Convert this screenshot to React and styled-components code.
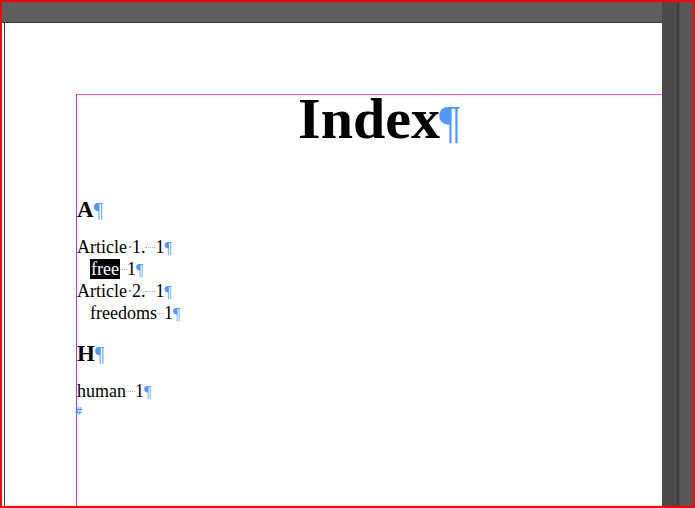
import React from "react";
import styled, { createGlobalStyle } from "styled-components";

const GlobalStyle = createGlobalStyle`
	html, body {
		margin: 0;
		padding: 0;
		background: #ffffff;
		overflow: hidden;
	}
`;

const BLUE = "#5097ff";

const Window = styled.div`
	box-sizing: border-box;
	width: 695px;
	height: 508px;
	border: 2px solid #ff0000;
	display: grid;
	grid-template-columns: 660px 1fr;
	overflow: hidden;
	font-family: "Liberation Serif", "Times New Roman", serif;
`;

const Workspace = styled.div`
	display: grid;
	grid-template-rows: 20px 1px 1fr;
	min-height: 0;
`;

const TopBar = styled.div`
	background: #5e5e5e;
`;

const BarEdge = styled.div`
	background: #3c3c3c;
`;

const Pasteboard = styled.div`
	background: #ffffff;
	padding-left: 2px;
	overflow: hidden;
	min-height: 0;
`;

const Sheet = styled.div`
	height: 100%;
	box-sizing: border-box;
	border-left: 1px solid #3a3a3a;
	padding: 71px 0 0 71px;
	background: #ffffff;
`;

const SidePanel = styled.div`
	display: grid;
	grid-template-columns: 15px 2px 1px 1fr;
`;

const PanelStrip = styled.div`
	background: ${(p) => p.tone};
`;

const TextFrame = styled.div`
	width: 604px;
	height: 420px;
	border-top: 1px solid #ff55ff;
	border-left: 1px solid #a43cf5;
	color: #000000;
`;

const Title = styled.h1`
	margin: 0;
	font-size: 58px;
	line-height: 47px;
	font-weight: bold;
	text-align: center;
`;

const Letter = styled.h2`
	margin: ${(p) => p.gap}px 0 0;
	font-size: 23px;
	line-height: 24px;
	font-weight: bold;
`;

const Entry = styled.div`
	margin: ${(p) => p.gap || 0}px 0 0;
	padding-left: ${(p) => (p.sub ? 13 : 0)}px;
	font-size: 18px;
	line-height: 22px;
	height: 22px;
	white-space: nowrap;
`;

const Pilcrow = styled.span`
	color: ${BLUE};
	font-weight: normal;
	line-height: 0;
	font-size: ${(p) => (p.big ? "0.8em" : "0.9em")};
	margin-left: ${(p) => (p.big ? -1 : 0)}px;
`;

const SpaceDot = styled.span`
	color: ${BLUE};
	letter-spacing: -1px;
`;

const Tab = styled.span`
	display: inline-block;
	width: ${(p) => p.w}px;
	height: 0;
	border-bottom: 1.5px dotted #8fbaff;
	vertical-align: 0.3em;
`;

const Highlight = styled.span`
	background: #000000;
	color: #ffffff;
	padding: 0 1px;
`;

const StoryEnd = styled.div`
	margin: 4px 0 0 -3px;
	font-family: "DejaVu Sans", sans-serif;
	font-size: 11px;
	line-height: 12px;
	color: ${BLUE};
`;

const entries = [
	{ letter: "A", gap: 56, items: [
		{ text: ["Article", "1."], page: "1", tab: 10 },
		{ text: ["free"], page: "1", tab: 7, sub: true, selected: true },
		{ text: ["Article", "2."], page: "1", tab: 10 },
		{ text: ["freedoms"], page: "1", tab: 7, sub: true },
	] },
	{ letter: "H", gap: 18, items: [
		{ text: ["human"], page: "1", tab: 9 },
	] },
];

const renderWords = (words, selected) =>
	words.map((w, i) => (
		<React.Fragment key={i}>
			{i > 0 && <SpaceDot>·</SpaceDot>}
			{selected ? <Highlight>{w}</Highlight> : w}
		</React.Fragment>
	));

export default function App() {
	return (
		<>
			<GlobalStyle />
			<Window>
				<Workspace>
					<TopBar />
					<BarEdge />
					<Pasteboard>
						<Sheet>
							<TextFrame>
								<Title>
									Index<Pilcrow big>¶</Pilcrow>
								</Title>
								{entries.map((group) => (
									<React.Fragment key={group.letter}>
										<Letter gap={group.gap}>
											{group.letter}
											<Pilcrow>¶</Pilcrow>
										</Letter>
										{group.items.map((item, i) => (
											<Entry key={i} sub={item.sub} gap={i === 0 ? 14 : 0}>
												{renderWords(item.text, item.selected)}
												<Tab w={item.tab} />
												{item.page}
												<Pilcrow>¶</Pilcrow>
											</Entry>
										))}
									</React.Fragment>
								))}
								<StoryEnd>#</StoryEnd>
							</TextFrame>
						</Sheet>
					</Pasteboard>
				</Workspace>
				<SidePanel>
					<PanelStrip tone="#4b4b4b" />
					<PanelStrip tone="#3c3c3c" />
					<PanelStrip tone="#4e4e4e" />
					<PanelStrip tone="#575757" />
				</SidePanel>
			</Window>
		</>
	);
}
